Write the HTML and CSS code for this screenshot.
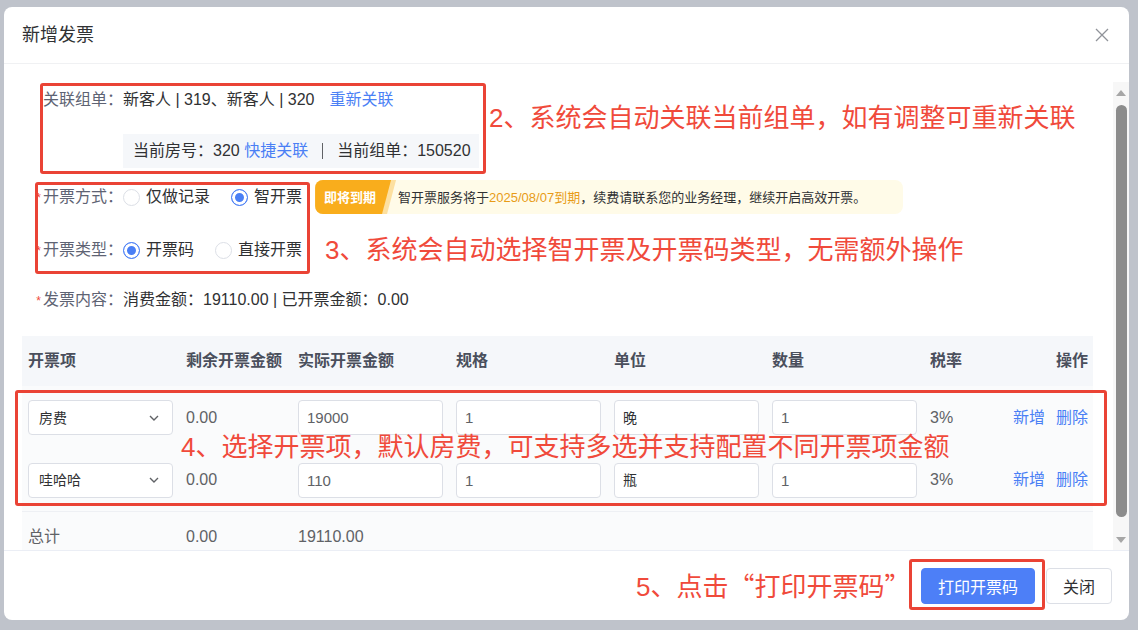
FILE: index.html
```html
<!DOCTYPE html>
<html lang="zh-CN">
<head>
    <meta charset="UTF-8">
    <meta name="viewport" content="width=device-width, initial-scale=1.0">
    <title>新增发票</title>
    <link rel="stylesheet" href="styles.css">
</head>
<body>
    <div class="page">
        <div class="dialog">
            <div class="dialog-header">
                <span class="dialog-title">新增发票</span>
                <svg class="close-icon" width="14" height="14" viewBox="0 0 14 14">
                    <path d="M1 1 L13 13 M13 1 L1 13" stroke="#909399" stroke-width="1.3" fill="none"/>
                </svg>
            </div>

            <div class="dialog-body">
                <div class="body-content">
                    <div class="form-item">
                        <span class="form-label">关联组单：</span>
                        <span class="form-value">新客人 | 319、新客人 | 320</span>
                        <a class="link relink">重新关联</a>
                    </div>

                    <div class="room-box">
                        当前房号：320&nbsp;<a class="link">快捷关联</a>
                        <span class="divider"></span>
                        当前组单：150520
                    </div>

                    <div class="form-item item-mode">
                        <span class="form-label"><i class="req">*</i>开票方式：</span>
                        <div class="radio-group">
                            <span class="radio"><span class="radio-circle"></span>仅做记录</span>
                            <span class="radio checked"><span class="radio-circle"></span>智开票</span>
                        </div>
                        <div class="notice">
                            <span class="notice-tag-wrap"><span class="notice-tag">即将到期</span></span>
                            <span class="notice-text">智开票服务将于<em>2025/08/07到期</em>，续费请联系您的业务经理，继续开启高效开票。</span>
                        </div>
                    </div>

                    <div class="form-item item-type">
                        <span class="form-label"><i class="req">*</i>开票类型：</span>
                        <div class="radio-group">
                            <span class="radio checked"><span class="radio-circle"></span>开票码</span>
                            <span class="radio"><span class="radio-circle"></span>直接开票</span>
                        </div>
                    </div>

                    <div class="form-item item-content">
                        <span class="form-label"><i class="req">*</i>发票内容：</span>
                        <span class="form-value">消费金额：19110.00 | 已开票金额：0.00</span>
                    </div>

                    <div class="invoice-table">
                        <div class="table-row table-head">
                            <div class="cell">开票项</div>
                            <div class="cell">剩余开票金额</div>
                            <div class="cell">实际开票金额</div>
                            <div class="cell">规格</div>
                            <div class="cell">单位</div>
                            <div class="cell">数量</div>
                            <div class="cell">税率</div>
                            <div class="cell cell-ops">操作</div>
                        </div>

                        <div class="table-row">
                            <div class="cell">
                                <div class="input select">
                                    <span class="cjk">房费</span>
                                    <svg width="12" height="12" viewBox="0 0 12 12"><path d="M2 4 L6 8 L10 4" stroke="#606266" stroke-width="1.4" fill="none"/></svg>
                                </div>
                            </div>
                            <div class="cell">0.00</div>
                            <div class="cell"><div class="input">19000</div></div>
                            <div class="cell"><div class="input">1</div></div>
                            <div class="cell"><div class="input cjk">晚</div></div>
                            <div class="cell"><div class="input">1</div></div>
                            <div class="cell">3%</div>
                            <div class="cell cell-ops"><a class="link">新增</a><a class="link">删除</a></div>
                        </div>

                        <div class="table-row row-last">
                            <div class="cell">
                                <div class="input select">
                                    <span class="cjk">哇哈哈</span>
                                    <svg width="12" height="12" viewBox="0 0 12 12"><path d="M2 4 L6 8 L10 4" stroke="#606266" stroke-width="1.4" fill="none"/></svg>
                                </div>
                            </div>
                            <div class="cell">0.00</div>
                            <div class="cell"><div class="input">110</div></div>
                            <div class="cell"><div class="input">1</div></div>
                            <div class="cell"><div class="input cjk">瓶</div></div>
                            <div class="cell"><div class="input">1</div></div>
                            <div class="cell">3%</div>
                            <div class="cell cell-ops"><a class="link">新增</a><a class="link">删除</a></div>
                        </div>

                        <div class="table-row table-total">
                            <div class="cell">总计</div>
                            <div class="cell">0.00</div>
                            <div class="cell">19110.00</div>
                        </div>
                    </div>
                </div>

                <div class="scrollbar">
                    <div class="scroll-track">
                        <span class="scroll-arrow up"></span>
                        <span class="scroll-thumb"></span>
                        <span class="scroll-arrow down"></span>
                    </div>
                </div>
            </div>

            <div class="dialog-footer">
                <button class="btn btn-primary">打印开票码</button>
                <button class="btn">关闭</button>
            </div>
        </div>

        <!-- 标注 -->
        <div class="mark mark-1"></div>
        <div class="mark mark-2"></div>
        <div class="mark mark-3"></div>
        <div class="mark mark-4"></div>
        <div class="tip tip-2">2、系统会自动关联当前组单，如有调整可重新关联</div>
        <div class="tip tip-3">3、系统会自动选择智开票及开票码类型，无需额外操作</div>
        <div class="tip tip-4">4、选择开票项，默认房费，可支持多选并支持配置不同开票项金额</div>
        <div class="tip tip-5">5、点击<span class="cjk-q">“</span>打印开票码<span class="cjk-q">”</span></div>
    </div>
</body>
</html>
```

FILE: styles.css
```css
body {
    margin: 0;
    font-family: "Liberation Sans", "Noto Sans CJK SC", sans-serif;
    line-height: 1;
    color: #303133;
}
.page {
    position: relative;
    width: 1138px;
    height: 630px;
    background: #bfc3cb;
    overflow: hidden;
}
.dialog {
    margin: 7px 0 0 4px;
    width: 1125px;
    height: 613px;
    background: #fff;
    border-radius: 8px;
    display: flex;
    flex-direction: column;
    overflow: hidden;
}
.dialog-header {
    height: 57px;
    box-sizing: border-box;
    border-bottom: 1px solid #f0f1f3;
    padding: 0 20px 0 18px;
    display: flex;
    align-items: center;
    justify-content: space-between;
}
.dialog-title {
    font-size: 18px;
    color: #303133;
}
.dialog-body {
    height: 486px;
    display: flex;
}
.body-content {
    flex: 1;
    padding: 20px 20px 0 18px;
    overflow: hidden;
}
.form-item {
    display: flex;
    align-items: center;
    height: 32px;
    font-size: 16px;
}
.form-label {
    width: 101px;
    text-align: right;
    color: #5e6373;
    flex-shrink: 0;
}
.req {
    font-style: normal;
    color: #f04a3b;
    font-size: 12px;
    margin-right: 2px;
}
.form-value {
    color: #303133;
}
.link {
    color: #4a7ff5;
    cursor: pointer;
}
.relink {
    margin-left: 15px;
}
.room-box {
    margin: 18px 0 0 101px;
    width: 356px;
    height: 34px;
    box-sizing: border-box;
    padding: 0 10px;
    background: #f5f7fa;
    display: flex;
    align-items: center;
    font-size: 16px;
    color: #303133;
    white-space: nowrap;
}
.divider {
    flex-shrink: 0;
    width: 1px;
    height: 16px;
    background: #606266;
    margin: 0 14px;
}
.item-mode {
    margin-top: 12px;
    height: 34px;
}
.item-type {
    margin-top: 20px;
}
.item-content {
    margin-top: 18px;
}
.radio-group {
    display: flex;
    align-items: center;
}
.radio {
    display: flex;
    align-items: center;
    color: #303133;
}
.radio + .radio {
    margin-left: 21px;
}
.radio-circle {
    width: 17px;
    height: 17px;
    box-sizing: border-box;
    border: 1px solid #dcdfe6;
    border-radius: 50%;
    margin-right: 6px;
    background: #fff;
}
.radio.checked .radio-circle {
    border: 1.5px solid #4a7ff5;
    background: #4a7ff5;
    box-shadow: inset 0 0 0 3px #fff;
}
.notice {
    margin-left: 13px;
    width: 588px;
    height: 34px;
    background: #fffbe8;
    border-radius: 8px;
    display: flex;
    align-items: center;
    overflow: hidden;
}
.notice-tag-wrap {
    height: 100%;
    padding-right: 5px;
    background: #fde0a0;
    clip-path: polygon(0 0, 100% 0, calc(100% - 9px) 100%, 0 100%);
}
.notice-tag {
    height: 100%;
    display: flex;
    align-items: center;
    padding: 0 15px 0 9px;
    background: #f9ad1c;
    color: #fff;
    font-size: 13px;
    font-weight: bold;
    clip-path: polygon(0 0, 100% 0, calc(100% - 9px) 100%, 0 100%);
}
.notice-text {
    margin-left: 2px;
    font-size: 13px;
    color: #303133;
    white-space: nowrap;
}
.notice-text em {
    font-style: normal;
    color: #e89b17;
}
.invoice-table {
    margin-top: 20px;
    font-size: 16px;
    color: #606266;
}
.table-row {
    display: grid;
    grid-template-columns: 158px 112px 158px 158px 158px 158px 82px 87px;
    align-items: center;
    height: 63px;
    background: #fafbfc;
    box-sizing: border-box;
}
.row-last {
    border-bottom: 1px solid #eef0f4;
}
.table-head {
    height: 50px;
    background: #f5f7fa;
    font-weight: bold;
    color: #4a4f5c;
}
.table-total {
    height: 50px;
}
.cell {
    padding-left: 6px;
    white-space: nowrap;
}
.cell-ops {
    text-align: right;
    padding-right: 5px;
}
.cell-ops .link + .link {
    margin-left: 11px;
}
.input {
    width: 145px;
    height: 35px;
    box-sizing: border-box;
    border: 1px solid #dcdfe6;
    border-radius: 4px;
    background: #fff;
    padding: 0 8px;
    display: flex;
    align-items: center;
    font-size: 15px;
    color: #606266;
}
.input.cjk,
.select .cjk {
    font-size: 14px;
    color: #303133;
}
.select {
    justify-content: space-between;
    padding: 0 12px 0 10px;
}
.scrollbar {
    width: 16px;
    padding-top: 18px;
    box-sizing: border-box;
}
.scroll-track {
    height: 100%;
    background: #f7f7f7;
    display: flex;
    flex-direction: column;
    align-items: center;
}
.scroll-arrow {
    width: 0;
    height: 0;
    border-left: 5px solid transparent;
    border-right: 5px solid transparent;
}
.scroll-arrow.up {
    border-bottom: 6px solid #a6a6a6;
    margin-top: 8px;
}
.scroll-thumb {
    width: 11px;
    height: 412px;
    margin-top: 9px;
    border-radius: 6px;
    background: #8c8c8c;
}
.scroll-arrow.down {
    border-top: 6px solid #a6a6a6;
    margin-top: 20px;
}
.dialog-footer {
    height: 70px;
    box-sizing: border-box;
    border-top: 1px solid #ebeef5;
    display: flex;
    align-items: center;
    justify-content: flex-end;
    padding-right: 17px;
}
.btn {
    height: 36px;
    padding: 0 16px;
    border: 1px solid #dcdfe6;
    border-radius: 4px;
    background: #fff;
    color: #303133;
    font-family: inherit;
    font-size: 16px;
    margin-left: 11px;
}
.btn-primary {
    background: #4d7ff7;
    border-color: #4d7ff7;
    color: #fff;
}
.mark {
    position: absolute;
    border: 3px solid #ea4335;
    border-radius: 3px;
    box-sizing: border-box;
}
.mark-1 { left: 40px; top: 83px; width: 446px; height: 91px; }
.mark-2 { left: 35px; top: 182px; width: 275px; height: 92px; }
.mark-3 { left: 15px; top: 390px; width: 1092px; height: 116px; }
.mark-4 { left: 909px; top: 559px; width: 136px; height: 51px; }
.tip {
    position: absolute;
    font-size: 26px;
    line-height: 26px;
    color: #f04a3b;
    white-space: nowrap;
}
.cjk-q {
    font-family: "Noto Sans CJK SC", sans-serif;
}
.tip-2 { left: 489px; top: 105px; }
.tip-3 { left: 325px; top: 237px; }
.tip-4 { left: 181px; top: 434px; }
.tip-5 { left: 636px; top: 572px; }
```
